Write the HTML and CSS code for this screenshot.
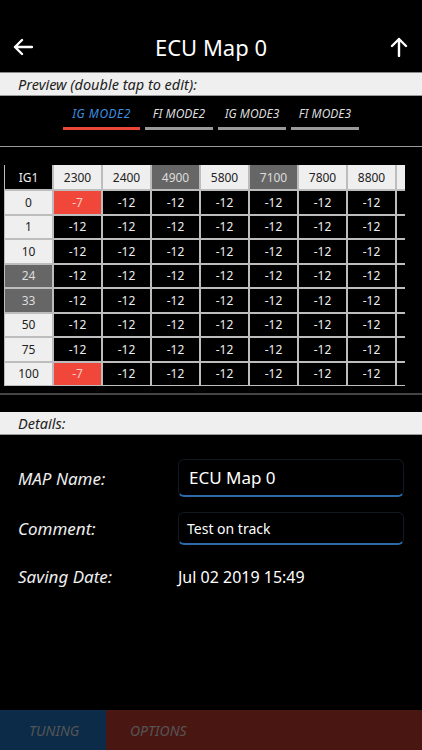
FILE: index.html
```html
<!DOCTYPE html>
<html lang="en">
<head>
    <meta charset="UTF-8" />
    <title>ECU Map 0</title>
    <link rel="stylesheet" href="styles.css">
</head>
<body>

<header class="topbar">
    <button class="icon-btn" type="button" aria-label="Back">
        <svg width="20" height="18" viewBox="0 0 20 18"><path d="M19 9H2M9 2L2 9l7 7" fill="none" stroke="#fff" stroke-width="2.4" stroke-linecap="round" stroke-linejoin="round"/></svg>
    </button>
    <h1>ECU Map 0</h1>
    <button class="icon-btn" type="button" aria-label="Upload">
        <svg width="18" height="20" viewBox="0 0 18 20"><path d="M9 19V2M2 9l7-7 7 7" fill="none" stroke="#fff" stroke-width="2.4" stroke-linecap="round" stroke-linejoin="round"/></svg>
    </button>
</header>

<div class="section-bar">Preview (double tap to edit):</div>

<nav class="modes">
    <span class="mode active">IG MODE2</span>
    <span class="mode">FI MODE2</span>
    <span class="mode">IG MODE3</span>
    <span class="mode">FI MODE3</span>
</nav>

<div class="map-wrap">
    <div class="map">
        <div class="cell corner">IG1</div>
        <div class="cell head">2300</div>
        <div class="cell head">2400</div>
        <div class="cell head mark">4900</div>
        <div class="cell head">5800</div>
        <div class="cell head mark">7100</div>
        <div class="cell head">7800</div>
        <div class="cell head">8800</div>
        <div class="cell head"></div>

        <div class="cell head">0</div>
        <div class="cell hot">-7</div>
        <div class="cell">-12</div><div class="cell">-12</div><div class="cell">-12</div>
        <div class="cell">-12</div><div class="cell">-12</div><div class="cell">-12</div><div class="cell"></div>

        <div class="cell head">1</div>
        <div class="cell">-12</div><div class="cell">-12</div><div class="cell">-12</div><div class="cell">-12</div>
        <div class="cell">-12</div><div class="cell">-12</div><div class="cell">-12</div><div class="cell"></div>

        <div class="cell head">10</div>
        <div class="cell">-12</div><div class="cell">-12</div><div class="cell">-12</div><div class="cell">-12</div>
        <div class="cell">-12</div><div class="cell">-12</div><div class="cell">-12</div><div class="cell"></div>

        <div class="cell head mark">24</div>
        <div class="cell">-12</div><div class="cell">-12</div><div class="cell">-12</div><div class="cell">-12</div>
        <div class="cell">-12</div><div class="cell">-12</div><div class="cell">-12</div><div class="cell"></div>

        <div class="cell head mark">33</div>
        <div class="cell">-12</div><div class="cell">-12</div><div class="cell">-12</div><div class="cell">-12</div>
        <div class="cell">-12</div><div class="cell">-12</div><div class="cell">-12</div><div class="cell"></div>

        <div class="cell head">50</div>
        <div class="cell">-12</div><div class="cell">-12</div><div class="cell">-12</div><div class="cell">-12</div>
        <div class="cell">-12</div><div class="cell">-12</div><div class="cell">-12</div><div class="cell"></div>

        <div class="cell head">75</div>
        <div class="cell">-12</div><div class="cell">-12</div><div class="cell">-12</div><div class="cell">-12</div>
        <div class="cell">-12</div><div class="cell">-12</div><div class="cell">-12</div><div class="cell"></div>

        <div class="cell head">100</div>
        <div class="cell hot">-7</div>
        <div class="cell">-12</div><div class="cell">-12</div><div class="cell">-12</div>
        <div class="cell">-12</div><div class="cell">-12</div><div class="cell">-12</div><div class="cell"></div>
    </div>
</div>

<hr class="divider" />

<div class="section-bar">Details:</div>

<div class="details">
    <div class="detail-row">
        <span class="label">MAP Name:</span>
        <div class="field big">ECU Map 0</div>
    </div>
    <div class="detail-row">
        <span class="label">Comment:</span>
        <div class="field">Test on track</div>
    </div>
    <div class="detail-row date">
        <span class="label">Saving Date:</span>
        <span class="value">Jul 02 2019 15:49</span>
    </div>
</div>

<footer class="tabbar">
    <span class="tab tuning">TUNING</span>
    <span class="tab options">OPTIONS</span>
</footer>

</body>
</html>
```

FILE: styles.css
```css
body {
    font-family: 'Noto Sans', 'Open Sans', sans-serif;
    background-color: #000;
    color: #fff;
    margin: 0;
    height: 750px;
    display: flex;
    flex-direction: column;
    overflow: hidden;
}
.topbar {
    height: 73px;
    display: flex;
    align-items: center;
    justify-content: space-between;
    padding: 22px 13px 0 13px;
    box-sizing: border-box;
    border-bottom: 1px solid #8a8a8a;
}
.topbar h1 {
    margin: 0;
    font-size: 22px;
    font-weight: 400;
}
.icon-btn {
    background: none;
    border: none;
    padding: 0;
    width: 20px;
    display: flex;
    justify-content: center;
    cursor: pointer;
}
.section-bar {
    height: 22px;
    line-height: 22px;
    background-color: #efefef;
    color: #222;
    font-style: italic;
    font-size: 14.5px;
    padding-left: 18px;
    border-bottom: 1px solid #9a9a9a;
}
.modes {
    height: 51px;
    display: flex;
    justify-content: center;
    align-items: flex-start;
    gap: 5px;
    border-bottom: 1px solid #9a9a9a;
    box-sizing: border-box;
    padding-top: 9px;
}
.mode {
    font-size: 12px;
    font-style: italic;
    color: #ddd;
    padding-bottom: 5px;
    border-bottom: 3px solid #9a9a9a;
    text-align: center;
    width: 68px;
}
.mode.active {
    width: 77px;
    color: #3d8fe0;
    letter-spacing: 0.5px;
    border-bottom-color: #ec4639;
}
.map-wrap {
    margin: 18px 0 0 4px;
    width: 401px;
    overflow: hidden;
}
.map {
    display: grid;
    grid-template-columns: repeat(9, 47px);
    grid-template-rows: 24px repeat(8, 22.5px);
    gap: 2px;
    width: max-content;
    padding: 0 0 1px 1px;
    background-color: #bdbdbd;
}
.cell {
    background-color: #000;
    color: #eee;
    font-size: 12px;
    display: flex;
    align-items: center;
    justify-content: center;
}
.cell.head {
    background-color: #efefef;
    color: #222;
}
.cell.corner {
    background-color: #000;
    color: #eee;
}
.cell.mark {
    background-color: #666;
    color: #ddd;
}
.cell.hot {
    background-color: #f1473b;
    color: #fbd0cc;
}
.divider {
    margin: 7px 0 17px 0;
    border: none;
    border-top: 2px solid #444;
}
.details {
    padding: 24px 18px 0 18px;
}
.detail-row {
    display: flex;
    align-items: center;
    margin-bottom: 15px;
}
.label {
    width: 160px;
    font-style: italic;
    font-size: 17px;
    color: #eee;
}
.field {
    flex: 1;
    height: 33px;
    box-sizing: border-box;
    border: 1px solid #111820;
    border-bottom: 2px solid #2b6aa6;
    border-radius: 6px;
    padding: 0 8px;
    display: flex;
    align-items: center;
    font-size: 14px;
}
.field.big {
    height: 38px;
    font-size: 17px;
    padding-left: 10px;
}
.detail-row.date {
    margin-top: 20px;
}
.value {
    font-size: 16px;
}
.tabbar {
    margin-top: auto;
    height: 40px;
    display: flex;
}
.tab {
    font-style: italic;
    font-size: 14px;
    color: #555;
    display: flex;
    align-items: center;
}
.tab.tuning {
    width: 106px;
    padding-left: 29px;
    box-sizing: border-box;
    background-color: #0c2b49;
}
.tab.options {
    flex: 1;
    padding-left: 24px;
    background-color: #4a1612;
}
```
